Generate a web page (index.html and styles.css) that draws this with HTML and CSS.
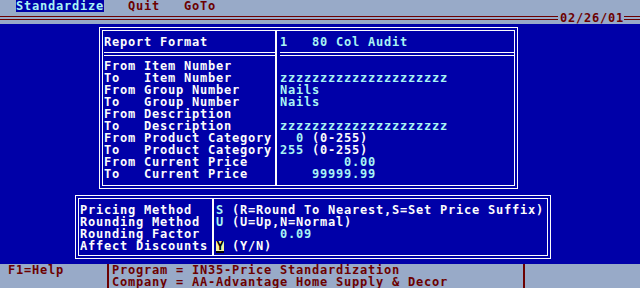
FILE: index.html
```html
<!DOCTYPE html>
<html>
<head>
    <link rel="stylesheet" href="styles.css">
</head>
<body>
    <div class="menu-bar">
        <span class="menu-item active">Standardize</span>
        <span class="menu-item">Quit</span>
        <span class="menu-item">GoTo</span>
    </div>
    <div class="title-bar">
        <div class="rule"></div>
        <span class="date">02/26/01</span>
        <div class="rule end"></div>
    </div>

    <div class="screen">
        <!-- report range box -->
        <div class="box report-box">
            <div class="frame">
                <div class="label first"><div class="line">Report Format</div></div>
                <div class="value first"><div class="line">1   80 Col Audit</div></div>

                <div class="label divider"><div class="double"></div></div>
                <div class="value divider"><div class="double"></div></div>

                <div class="label last">
                    <div class="line">From Item Number</div>
                    <div class="line">To   Item Number</div>
                    <div class="line">From Group Number</div>
                    <div class="line">To   Group Number</div>
                    <div class="line">From Description</div>
                    <div class="line">To   Description</div>
                    <div class="line">From Product Category</div>
                    <div class="line">To   Product Category</div>
                    <div class="line">From Current Price</div>
                    <div class="line">To   Current Price</div>
                </div>
                <div class="value last">
                    <div class="line"></div>
                    <div class="line">zzzzzzzzzzzzzzzzzzzzz</div>
                    <div class="line">Nails</div>
                    <div class="line">Nails</div>
                    <div class="line"></div>
                    <div class="line">zzzzzzzzzzzzzzzzzzzzz</div>
                    <div class="line">  0<span class="hint"> (0-255)</span></div>
                    <div class="line">255<span class="hint"> (0-255)</span></div>
                    <div class="line">        0.00</div>
                    <div class="line">    99999.99</div>
                </div>
            </div>
        </div>

        <!-- pricing options box -->
        <div class="box pricing-box">
            <div class="frame">
                <div class="label fields">
                    <div class="line">Pricing Method</div>
                    <div class="line">Rounding Method</div>
                    <div class="line">Rounding Factor</div>
                    <div class="line">Affect Discounts</div>
                </div>
                <div class="value fields">
                    <div class="line">S<span class="hint"> (R=Round To Nearest,S=Set Price Suffix)</span></div>
                    <div class="line">U<span class="hint"> (U=Up,N=Normal)</span></div>
                    <div class="line">        0.09</div>
                    <div class="line"><span class="cursor">Y</span><span class="hint"> (Y/N)</span></div>
                </div>
            </div>
        </div>
    </div>

    <div class="status-bar">
        <div class="help">F1=Help</div>
        <div class="info">
            <div class="line">Program = IN35-Price Standardization</div>
            <div class="line">Company = AA-Advantage Home Supply &amp; Decor</div>
        </div>
    </div>
</body>
</html>
```
FILE: styles.css
```css
* { box-sizing: border-box; }
body {
    margin: 0;
    width: 640px;
    height: 288px;
    overflow: hidden;
    background: #0000a8;
    color: #fcfcfc;
    font-family: 'DejaVu Sans Mono', monospace;
    font-size: 12px;
    letter-spacing: 0.776px;
    font-weight: bold;
    line-height: 12px;
}
.line { height: 12px; white-space: pre; }

/* top bars */
.menu-bar, .title-bar, .status-bar {
    background: #98aac8;
    color: #6c0000;
    display: flex;
}
.menu-bar { height: 12px; padding-left: 16px; }
.menu-item { margin-right: 24px; white-space: pre; }
.menu-item.active { background: #0000a8; color: #a8f4f4; }
.title-bar { height: 12px; }
.rule {
    flex: 1;
    height: 4px;
    margin-top: 4px;
    border-top: 1px solid #6c0000;
    border-bottom: 1px solid #6c0000;
}
.rule.end { flex: none; width: 16px; }
.date { width: 66px; padding-left: 2px; }

/* boxes */
.screen { height: 240px; padding-top: 3px; }
.box { border: 1px solid #fcfcfc; padding: 2px; }
.frame { border: 1px solid #fcfcfc; display: grid; }
.label { border-right: 2px solid #fcfcfc; }
.value { color: #a8f4f4; }
.hint { color: #fcfcfc; }
.first { padding-top: 5px; }
.divider { padding: 4px 0; }
.double {
    height: 4px;
    border-top: 1px solid #fcfcfc;
    border-bottom: 1px solid #fcfcfc;
}
.last { padding-bottom: 5px; }

.report-box { margin-left: 99px; width: 419px; }
.report-box .frame { grid-template-columns: 174px 1fr; }
.report-box .label { padding-left: 1px; }
.report-box .value { padding-left: 3px; }

.pricing-box { margin: 6px 0 0 75px; width: 476px; }
.pricing-box .frame { grid-template-columns: 135px 1fr; }
.pricing-box .label { padding-left: 1px; }
.pricing-box .value { padding-left: 2px; }
.fields { padding: 5px 0 3px; }
.cursor {
    display: inline-block;
    width: 8px;
    height: 12px;
    background: #f4f4a0;
    color: #000;
    border-bottom: 2px solid #000;
    line-height: 10px;
    letter-spacing: 0;
    text-align: center;
}

/* status bar */
.status-bar { height: 24px; }
.help { width: 109px; padding-left: 8px; border-right: 2px solid #6c0000; }
.info { width: 416px; padding-left: 3px; border-right: 2px solid #6c0000; }
```
